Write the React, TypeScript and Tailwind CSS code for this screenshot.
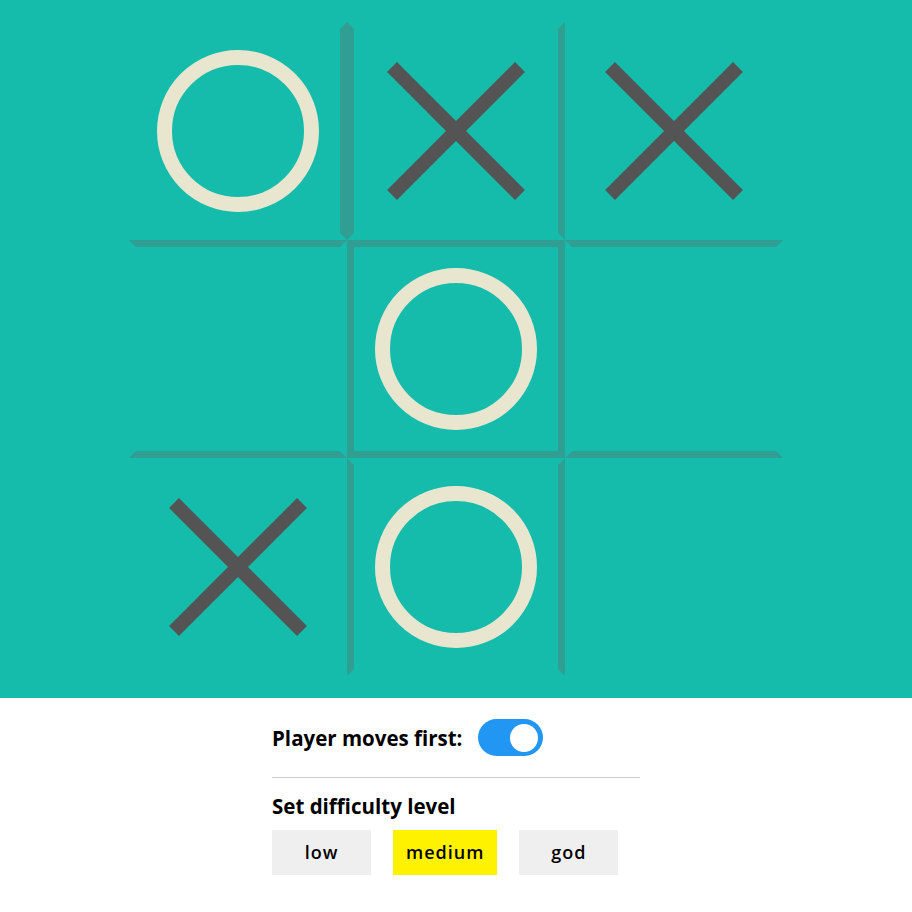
import { useState } from 'react';

type Mark = 'X' | 'O' | null;

const board: Mark[] = ['O', 'X', 'X', null, 'O', null, 'X', 'O', null];

// which sides of each cell carry the visible grid line
const cellBorders = [
  'border-r-[#309e92] border-l-transparent border-t-transparent border-b-transparent',
  'border-l-[#309e92] border-r-[#309e92] border-t-transparent border-b-transparent',
  'border-l-transparent border-r-transparent border-t-transparent border-b-transparent',
  'border-t-[#309e92] border-b-[#309e92] border-l-transparent border-r-transparent',
  'border-[#309e92]',
  'border-t-[#309e92] border-b-[#309e92] border-l-transparent border-r-transparent',
  'border-l-transparent border-r-transparent border-t-transparent border-b-transparent',
  'border-l-[#309e92] border-r-[#309e92] border-t-transparent border-b-transparent',
  'border-l-transparent border-r-transparent border-t-transparent border-b-transparent',
];

function Cross() {
  return (
    <svg width="138" height="138" viewBox="0 0 138 138" aria-hidden="true">
      <line x1="5" y1="5" x2="133" y2="133" stroke="#545454" strokeWidth="14" />
      <line x1="133" y1="5" x2="5" y2="133" stroke="#545454" strokeWidth="14" />
    </svg>
  );
}

function Nought() {
  return <div className="h-[162px] w-[162px] rounded-full border-[15px] border-[#e9e6d0]" />;
}

const levels = ['low', 'medium', 'god'] as const;

export default function App() {
  const [playerFirst, setPlayerFirst] = useState(true);
  const [level, setLevel] = useState<(typeof levels)[number]>('medium');

  return (
    <div className="min-h-[912px] bg-white font-['Open_Sans',sans-serif] text-black">
      <div className="bg-[#15bcab] py-[22px]">
        <div className="mx-auto grid w-[654px] grid-cols-3">
          {board.map((mark, i) => (
            <div
              key={i}
              className={`box-border flex h-[218px] w-[218px] items-center justify-center border-[7px] ${cellBorders[i]}`}
            >
              {mark === 'X' && <Cross />}
              {mark === 'O' && <Nought />}
            </div>
          ))}
        </div>
      </div>

      <div className="mx-auto w-[368px] pt-[21px]">
        <div className="flex items-center gap-4">
          <span className="text-[20.5px] font-bold leading-[28px]">Player moves first:</span>
          <button
            type="button"
            onClick={() => setPlayerFirst(!playerFirst)}
            className={`flex h-[37px] w-[65px] items-center rounded-full px-[5px] ${
              playerFirst ? 'justify-end bg-[#2196f3]' : 'justify-start bg-[#ccc]'
            }`}
          >
            <span className="size-[28px] rounded-full bg-white" />
          </button>
        </div>

        <hr className="mt-[21px] border-t border-[#cccccc]" />

        <p className="mt-[14px] text-[20.5px] font-bold leading-[28px]">Set difficulty level</p>
        <div className="mt-[10px] flex gap-[22px]">
          {levels.map((l) => (
            <button
              key={l}
              type="button"
              onClick={() => setLevel(l)}
              className={`h-[45px] min-w-[99px] px-[13px] text-[18px] font-semibold tracking-[1px] ${
                level === l ? 'bg-[#fff200]' : 'bg-[#efefef]'
              }`}
            >
              {l}
            </button>
          ))}
        </div>
      </div>
    </div>
  );
}
